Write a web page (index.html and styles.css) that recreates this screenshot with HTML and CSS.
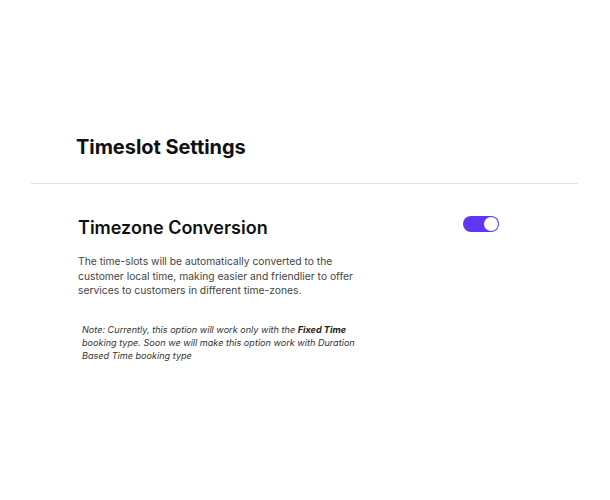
FILE: index.html
```html
<!DOCTYPE html>
<html>
<head>
<meta charset="utf-8">
<link rel="stylesheet" href="styles.css">
</head>
<body>
<div class="page">
  <div class="header">
    <h1 class="title">Timeslot Settings</h1>
  </div>
  <div class="section">
    <div class="row">
      <div class="info">
        <h2 class="subtitle">Timezone Conversion</h2>
        <p class="desc">The time-slots will be automatically converted to the customer local time, making easier and friendlier to offer services to customers in different time-zones.</p>
        <p class="note">Note: Currently, this option will work only with the <b>Fixed Time</b> booking type. Soon we will make this option work with Duration Based Time booking type</p>
      </div>
      <div class="toggle"><span class="knob"></span></div>
    </div>
  </div>
</div>
</body>
</html>
```
FILE: styles.css
```css
html, body {
  margin: 0;
  padding: 0;
  background: #ffffff;
}
body {
  font-family: Inter, "Noto Sans", sans-serif;
  color: #111;
}
.page {
  width: 547px;
  margin: 0 0 0 31px;
  padding-top: 134px;
}
.header {
  padding: 0 0 23px 45px;
  border-bottom: 1px solid #e0e0e0;
}
.title {
  margin: 0;
  font-size: 20px;
  line-height: 26px;
  font-weight: 700;
  letter-spacing: -0.05px;
}
.section {
  padding: 32px 0 0 47px;
}
.row {
  display: flex;
  justify-content: space-between;
  align-items: flex-start;
}
.info {
  width: 290px;
}
.subtitle {
  margin: 0;
  font-size: 18px;
  line-height: 24px;
  font-weight: 600;
  letter-spacing: 0;
}
.desc {
  margin: 14px 0 0 0;
  font-size: 10.3px;
  line-height: 14.5px;
  color: #444;
}
.note {
  width: 282px;
  margin: 25px 0 0 4px;
  font-size: 9.1px;
  line-height: 13px;
  font-style: italic;
  color: #333;
}
.note b {
  font-weight: 700;
  color: #222;
}
.toggle {
  width: 36px;
  height: 16px;
  border-radius: 8px;
  background: #6135f5;
  margin: 0 79px 0 0;
  display: flex;
  align-items: center;
  justify-content: flex-end;
  padding: 0 1px;
  box-sizing: border-box;
}
.knob {
  width: 14px;
  height: 14px;
  border-radius: 50%;
  background: #fff;
}
```
